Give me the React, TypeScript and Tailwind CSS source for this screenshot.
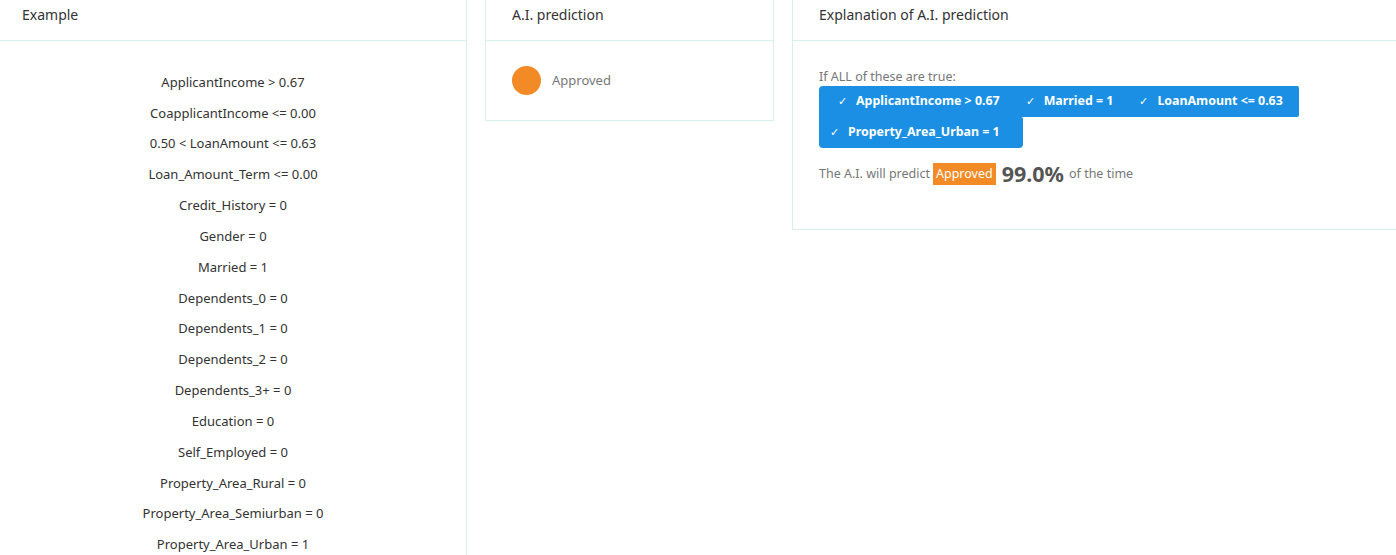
const features = [
  "ApplicantIncome > 0.67",
  "CoapplicantIncome <= 0.00",
  "0.50 < LoanAmount <= 0.63",
  "Loan_Amount_Term <= 0.00",
  "Credit_History = 0",
  "Gender = 0",
  "Married = 1",
  "Dependents_0 = 0",
  "Dependents_1 = 0",
  "Dependents_2 = 0",
  "Dependents_3+ = 0",
  "Education = 0",
  "Self_Employed = 0",
  "Property_Area_Rural = 0",
  "Property_Area_Semiurban = 0",
  "Property_Area_Urban = 1",
];

const anchors = [
  { label: "ApplicantIncome > 0.67", cls: "pl-[19px] pr-[13px] rounded-tl-[4px]" },
  { label: "Married = 1", cls: "px-[13px]" },
  { label: "LoanAmount <= 0.63", cls: "pl-[13px] pr-[16px] rounded-r-[2px]" },
  { label: "Property_Area_Urban = 1", cls: "pl-[11px] pr-[23px] rounded-b-[4px] rounded-tr-[2px]" },
];

function CardHeader({ title, pad }: { title: string; pad: string }) {
  return (
    <div className={`h-[41px] border-b border-[#d9eeee] ${pad} pt-[4px] text-[14px] text-[#333]`}>
      {title}
    </div>
  );
}

export default function App() {
  return (
    <div
      className="flex h-[555px] w-[1396px] items-start overflow-hidden bg-white"
      style={{ fontFamily: '"Noto Sans", "Open Sans", sans-serif' }}
    >
      <section className="w-[467px] shrink-0 self-stretch border-r border-[#d9eeee]">
        <CardHeader title="Example" pad="pl-[22px]" />
        <div className="flex flex-col items-center pt-[26px] text-[13px] text-[#333]">
          {features.map((f) => (
            <div key={f} className="flex h-[30.85px] items-center">
              {f}
            </div>
          ))}
        </div>
      </section>

      <section className="ml-[18px] w-[289px] shrink-0 border-x border-b border-[#d9eeee]">
        <CardHeader title="A.I. prediction" pad="pl-[26px]" />
        <div className="flex h-[79px] items-center gap-[11px] px-[26px]">
          <span className="h-[29px] w-[29px] rounded-full bg-[#f28a26]" />
          <span className="text-[13px] text-[#777]">Approved</span>
        </div>
      </section>

      <section className="ml-[18px] w-[620px] shrink-0 border-x border-b border-[#d9eeee]">
        <CardHeader title="Explanation of A.I. prediction" pad="pl-[26px]" />
        <div className="h-[188px] px-[26px] pt-[27px]">
          <div className="text-[12.5px] leading-[17px] text-[#777]">If ALL of these are true:</div>
          <div className="mt-[1px] flex w-[552px] flex-wrap">
            {anchors.map((a) => (
              <span
                key={a.label}
                className={`flex h-[31px] items-center bg-[#1a8fe3] text-[12.4px] font-bold text-white ${a.cls}`}
              >
                <span className="mr-[9px] text-[11px] font-normal">✓</span>
                {a.label}
              </span>
            ))}
          </div>
          <div className="mt-[15px] flex items-center text-[12.5px] text-[#777]">
            <span>The A.I. will predict</span>
            <span className="ml-[3px] flex h-[22px] items-center bg-[#f28a26] px-[3px] text-white">Approved</span>
            <span className="ml-[6px] text-[21.5px] font-bold leading-none text-[#555]">99.0%</span>
            <span className="ml-[5px]">of the time</span>
          </div>
        </div>
      </section>
    </div>
  );
}
